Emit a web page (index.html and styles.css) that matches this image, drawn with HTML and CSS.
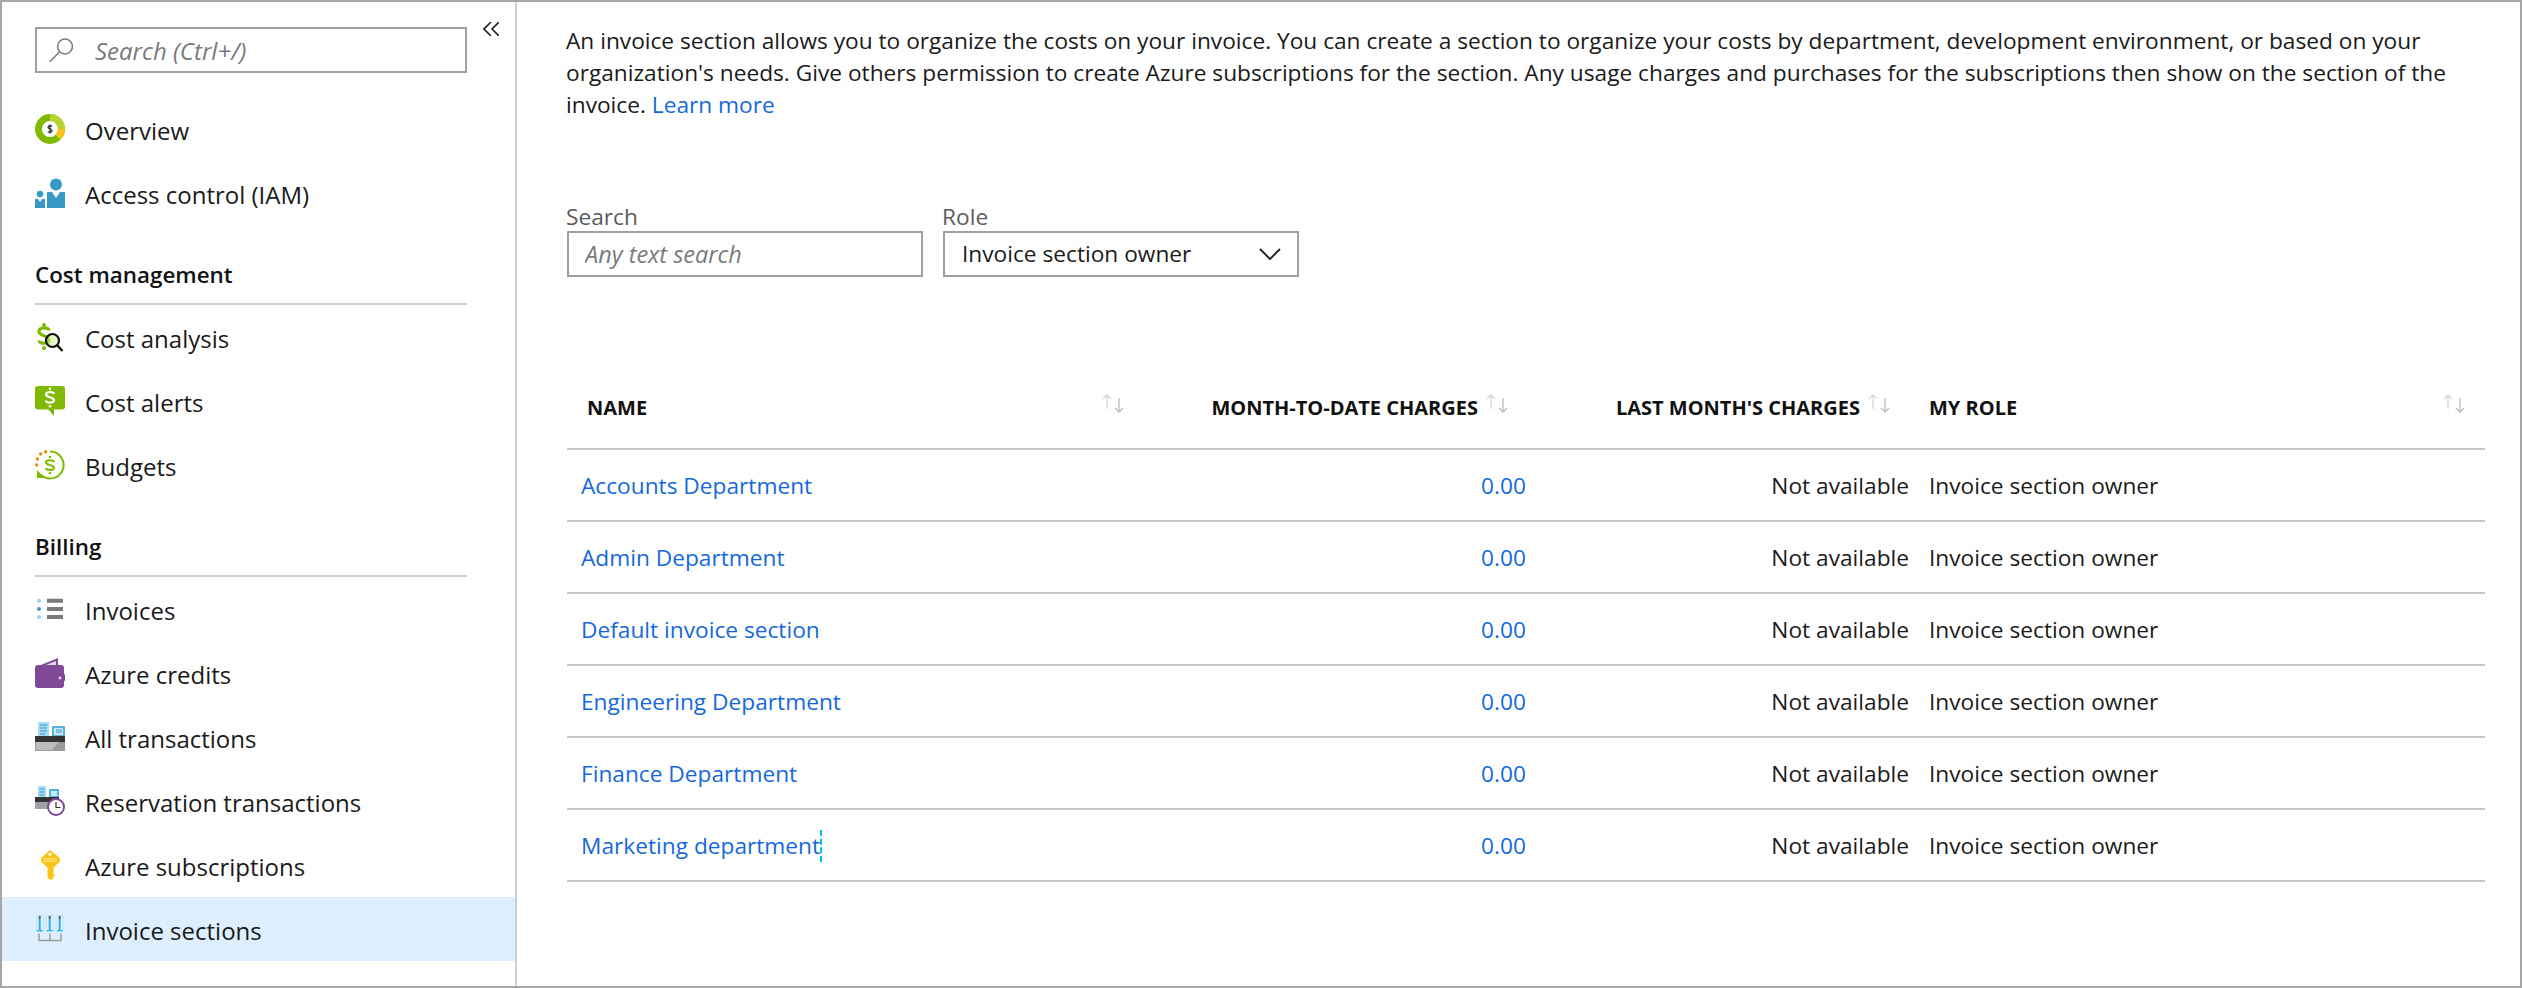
FILE: index.html
```html
<!DOCTYPE html>
<html lang="en">
<head>
    <meta charset="UTF-8">
    <meta name="viewport" content="width=device-width, initial-scale=1.0">
    <title>Invoice sections</title>
    <link rel="stylesheet" href="styles.css">
</head>
<body>
<div class="frame">
    <nav class="sidebar">
        <div class="side-top">
            <div class="side-search">
                <svg class="search-icon" viewBox="0 0 24 24" fill="none" stroke="#7a7a7a" stroke-width="1.5"><circle cx="16" cy="8.5" r="7.4"/><path d="M10.6 13.8 0.6 24"/></svg>
                <input class="side-input" type="text" placeholder="Search (Ctrl+/)">
            </div>
            <svg class="collapse" viewBox="0 0 16 14" fill="none" stroke="#222" stroke-width="1.6"><path d="M8 0 1 7l7 7M16 0 9 7l7 7"/></svg>
        </div>

        <a class="nav-item">
            <svg class="nav-icon" viewBox="0 0 30 30">
                <circle cx="15" cy="15" r="11.5" fill="none" stroke="#7fba00" stroke-width="7"/>
                <path d="M15 0A15 15 0 0 1 30 15H22.500A7.500 7.500 0 0 0 15 7.500Z" fill="#b8d432"/>
                <path d="M30 15A15 15 0 0 1 25.500 25.700L20.300 20.400A7.500 7.500 0 0 0 22.500 15Z" fill="#fcc419"/>
                <circle cx="15" cy="15" r="7.700" fill="#fff"/>
                <path d="M17 12.600C17 11.300 13 11 13 13.300 13 15.400 17 14.700 17 16.800 17 18.900 13 18.600 13 17.300M15 10.500V19.500" fill="none" stroke="#222" stroke-width="1.200"/>
            </svg>
            <span>Overview</span>
        </a>
        <a class="nav-item">
            <svg class="nav-icon" viewBox="0 0 30 30" fill="#3999c6">
                <circle cx="21" cy="6.500" r="6"/>
                <path d="M12 14H17L21 20 25 14H30V30H12Z"/>
                <circle cx="5" cy="16" r="3.300"/>
                <path d="M0 21H3L5 24 7 21H10V30H0Z"/>
            </svg>
            <span>Access control (IAM)</span>
        </a>

        <div class="side-heading">Cost management</div>
        <a class="nav-item">
            <svg class="nav-icon" viewBox="0 0 30 30">
                <circle cx="9" cy="3" r="2" fill="#7fba00"/>
                <circle cx="9" cy="26" r="2" fill="#7fba00"/>
                <path d="M14 8.500C14 5 4 4.500 4 9.500 4 14.500 14 13 14 18 14 22.500 4 22 4 18.500" fill="none" stroke="#7fba00" stroke-width="3.200"/>
                <circle cx="17.500" cy="18.500" r="6.500" fill="#d6eb9f" fill-opacity=".55" stroke="#111" stroke-width="2.200"/>
                <path d="M22 23 27.500 29" stroke="#111" stroke-width="2.400"/>
            </svg>
            <span>Cost analysis</span>
        </a>
        <a class="nav-item">
            <svg class="nav-icon" viewBox="0 0 30 30">
                <rect width="30" height="23.500" rx="3" fill="#7fba00"/>
                <path d="M13 23H19V30Z" fill="#7fba00"/>
                <circle cx="15" cy="2.800" r="1.300" fill="#fff"/>
                <circle cx="15" cy="20.200" r="1.300" fill="#fff"/>
                <path d="M19 8C19 5.600 11 5.200 11 8.500 11 11.800 19 10.700 19 14.300 19 17.600 11 17.200 11 14.500" fill="none" stroke="#fff" stroke-width="2.200"/>
            </svg>
            <span>Cost alerts</span>
        </a>
        <a class="nav-item">
            <svg class="nav-icon" viewBox="0 0 30 30">
                <path d="M15 1.500A13.500 13.500 0 1 1 6 25" fill="none" stroke="#7fba00" stroke-width="2"/>
                <path d="M2 20V28H10Z" fill="#7fba00"/>
                <circle cx="1.800" cy="15" r="1.700" fill="#e8890c"/>
                <circle cx="2.400" cy="9" r="1.700" fill="#e8890c"/>
                <circle cx="5.700" cy="4" r="1.700" fill="#e8890c"/>
                <circle cx="10.700" cy="1.800" r="1.700" fill="#e8890c"/>
                <circle cx="15" cy="7" r="1.300" fill="#7fba00"/>
                <circle cx="15" cy="23" r="1.300" fill="#7fba00"/>
                <path d="M19 12C19 9.800 11 9.400 11 12.500 11 15.600 19 14.400 19 17.800 19 20.800 11 20.500 11 18" fill="none" stroke="#7fba00" stroke-width="2.200"/>
            </svg>
            <span>Budgets</span>
        </a>

        <div class="side-heading">Billing</div>
        <a class="nav-item">
            <svg class="nav-icon" viewBox="0 0 30 30">
                <circle cx="4" cy="6.700" r="2" fill="#8fd3f0"/>
                <circle cx="4" cy="15" r="2" fill="#3999c6"/>
                <circle cx="4" cy="23" r="2" fill="#8fd3f0"/>
                <path d="M12 4.700H28V8.700H12ZM12 13H28V17H12ZM12 21H28V25H12Z" fill="#7a7a7a"/>
            </svg>
            <span>Invoices</span>
        </a>
        <a class="nav-item">
            <svg class="nav-icon" viewBox="0 0 30 30">
                <path d="M1 9 23 0V10H1Z" fill="#804998"/>
                <path d="M6 9 21 3V9Z" fill="#e4d6ea"/>
                <rect y="7" width="29" height="23" rx="3" fill="#804998"/>
                <rect x="26" y="16" width="4" height="7" rx="1" fill="#804998"/>
                <circle cx="25" cy="20" r="1.400" fill="#e4d6ea"/>
            </svg>
            <span>Azure credits</span>
        </a>
        <a class="nav-item">
            <svg class="nav-icon" viewBox="0 0 30 30">
                <path d="M3 0H14V15H3Z" fill="#a8dcf2"/>
                <path d="M5 3H12M5 6H12M5 9H12M5 12H10" stroke="#3999c6" stroke-width="1.200"/>
                <path d="M17 4H30V15H17Z" fill="#59b4d9"/>
                <path d="M19 6H28V13H19Z" fill="#c7eaf8"/>
                <path d="M21 8H27M21 10H27" stroke="#3999c6" stroke-width="1.200"/>
                <path d="M0 14H30V20H0Z" fill="#333333"/>
                <path d="M0 20H30V29H0Z" fill="#999a9b"/>
                <path d="M1 20H24L17 28H1Z" fill="#bcbcbc"/>
            </svg>
            <span>All transactions</span>
        </a>
        <a class="nav-item">
            <svg class="nav-icon" viewBox="0 0 30 30">
                <path d="M3 0H11V12H3Z" fill="#a8dcf2"/>
                <path d="M4.500 3H9.500M4.500 6H9.500M4.500 9H9.500" stroke="#3999c6" stroke-width="1"/>
                <path d="M14 3H24V12H14Z" fill="#59b4d9"/>
                <path d="M16 5H22V10H16Z" fill="#c7eaf8"/>
                <path d="M0 11H24V16H0Z" fill="#333333"/>
                <path d="M0 16H24V23H0Z" fill="#a0a1a2"/>
                <circle cx="21" cy="21" r="8" fill="#fff" stroke="#804998" stroke-width="2"/>
                <path d="M21 16V21.500H25.500" fill="none" stroke="#333" stroke-width="1.200"/>
            </svg>
            <span>Reservation transactions</span>
        </a>
        <a class="nav-item">
            <svg class="nav-icon" viewBox="0 0 30 30">
                <path d="M15 0 25 8V11.500L18.500 17.500V24L20 25.500 18 27 18.500 28.500 15.500 30 12.500 28V17.500L6 11.500V8Z" fill="#fcc419"/>
                <circle cx="15" cy="4.200" r="1.500" fill="#fff"/>
                <path d="M8.500 8.800H21.500M8.500 11.400H21.500" stroke="#ffe58a" stroke-width="1.200"/>
            </svg>
            <span>Azure subscriptions</span>
        </a>
        <a class="nav-item nav-active">
            <svg class="nav-icon" viewBox="0 0 30 30">
                <g fill="none" stroke="#9adcf5" stroke-width="1" stroke-dasharray="1 1">
                    <rect x="1.500" y="1.500" width="7" height="16"/>
                    <rect x="11" y="1.500" width="7" height="16"/>
                    <rect x="21" y="1.500" width="7" height="16"/>
                </g>
                <path d="M4.700 2V5M14.700 2V5M24.700 2V5" stroke="#5a5a5a" stroke-width="2"/>
                <path d="M4.700 5V16M14.700 5V16M24.700 5V16" stroke="#32aee6" stroke-width="2"/>
                <path d="M2 16.700H7.500M12 16.700H17.500M22 16.700H27.500" stroke="#32aee6" stroke-width="1.200"/>
                <path d="M4 19.500V26.500H26V19.500M15 19.500V26.500" fill="none" stroke="#9a9a9a" stroke-width="1.500"/>
            </svg>
            <span>Invoice sections</span>
        </a>
    </nav>

    <main class="content">
        <p class="intro">An invoice section allows you to organize the costs on your invoice. You can create a section to organize your costs by department, development environment, or based on your<br>organization's needs. Give others permission to create Azure subscriptions for the section. Any usage charges and purchases for the subscriptions then show on the section of the<br>invoice. <a class="link">Learn more</a></p>

        <div class="filters">
            <div class="field">
                <label class="field-label" for="sectionSearch">Search</label>
                <input class="field-box field-input" id="sectionSearch" type="text" placeholder="Any text search">
            </div>
            <div class="field">
                <span class="field-label">Role</span>
                <div class="field-box field-select">
                    <span>Invoice section owner</span>
                    <svg class="select-chevron" viewBox="0 0 22 12" fill="none" stroke="#222" stroke-width="1.900"><path d="M1 1 11 11 21 1"/></svg>
                </div>
            </div>
        </div>

        <table class="sections">
            <colgroup>
                <col class="col-name">
                <col class="col-month">
                <col class="col-last">
                <col class="col-role">
            </colgroup>
            <thead>
                <tr>
                    <th class="th-name"><div class="th-inner between">NAME <svg class="sort" viewBox="0 0 24 20"><use href="#sortArrows"/></svg></div></th>
                    <th class="th-month"><div class="th-inner end">MONTH-TO-DATE CHARGES <svg class="sort" viewBox="0 0 24 20"><use href="#sortArrows"/></svg></div></th>
                    <th class="th-last"><div class="th-inner end">LAST MONTH'S CHARGES <svg class="sort" viewBox="0 0 24 20"><use href="#sortArrows"/></svg></div></th>
                    <th class="th-role"><div class="th-inner between">MY ROLE <svg class="sort" viewBox="0 0 24 20"><use href="#sortArrows"/></svg></div></th>
                </tr>
            </thead>
            <tbody>
                <tr><td class="td-name"><a class="link">Accounts Department</a></td><td class="td-month"><a class="link">0.00</a></td><td class="td-last">Not available</td><td class="td-role">Invoice section owner</td></tr>
                <tr><td class="td-name"><a class="link">Admin Department</a></td><td class="td-month"><a class="link">0.00</a></td><td class="td-last">Not available</td><td class="td-role">Invoice section owner</td></tr>
                <tr><td class="td-name"><a class="link">Default invoice section</a></td><td class="td-month"><a class="link">0.00</a></td><td class="td-last">Not available</td><td class="td-role">Invoice section owner</td></tr>
                <tr><td class="td-name"><a class="link">Engineering Department</a></td><td class="td-month"><a class="link">0.00</a></td><td class="td-last">Not available</td><td class="td-role">Invoice section owner</td></tr>
                <tr><td class="td-name"><a class="link">Finance Department</a></td><td class="td-month"><a class="link">0.00</a></td><td class="td-last">Not available</td><td class="td-role">Invoice section owner</td></tr>
                <tr><td class="td-name"><a class="link link-focus">Marketing department</a></td><td class="td-month"><a class="link">0.00</a></td><td class="td-last">Not available</td><td class="td-role">Invoice section owner</td></tr>
            </tbody>
        </table>
    </main>
</div>

<svg class="defs" width="0" height="0">
    <symbol id="sortArrows" viewBox="0 0 24 20">
        <path d="M5 15V1M1 5 5 1 9 5" fill="none" stroke="#d8d8d8" stroke-width="1.300"/>
        <path d="M17 4V18M13 14 17 18 21 14" fill="none" stroke="#bdbdbd" stroke-width="1.300"/>
    </symbol>
</svg>
</body>
</html>
```

FILE: styles.css
```css
* {
    box-sizing: border-box;
}

body {
    margin: 0;
    font-family: "Open Sans", "Noto Sans", sans-serif;
    font-size: 22.7px;
    line-height: 32px;
    color: #1a1a1a;
    background-color: #ffffff;
}

.frame {
    display: flex;
    height: 988px;
    border: 2px solid #a6a6a6;
}

/* sidebar */
.sidebar {
    width: 515px;
    flex-shrink: 0;
    padding-top: 25px;
    border-right: 2px solid #cfcfcf;
}

.side-top {
    display: flex;
    padding-left: 33px;
    margin-bottom: 24px;
}

.side-search {
    display: flex;
    align-items: center;
    width: 432px;
    height: 46px;
    padding-left: 12px;
    border: 2px solid #a0a0a0;
}

.search-icon {
    width: 24px;
    height: 24px;
    flex-shrink: 0;
}

.side-input {
    flex: 1;
    min-width: 0;
    margin-left: 22px;
    padding: 0;
    border: none;
    outline: none;
    font-family: inherit;
    font-size: 24px;
    font-style: italic;
    color: #7a7a7a;
}

.side-input::placeholder,
.field-input::placeholder {
    color: #7a7a7a;
    opacity: 1;
}

.collapse {
    width: 16px;
    height: 14px;
    margin: -5px 0 0 16px;
}

.nav-item {
    display: flex;
    align-items: center;
    gap: 20px;
    height: 64px;
    padding-left: 33px;
    font-size: 24px;
}

.nav-item span {
    padding-top: 3px;
}

.nav-active {
    background-color: #ddeffe;
}

.nav-icon {
    width: 30px;
    height: 30px;
    flex-shrink: 0;
}

.side-heading {
    margin: 0 48px 0 33px;
    padding: 34px 0 12px;
    border-bottom: 2px solid #cfcfcf;
    font-weight: 600;
    font-size: 22.4px;
    color: #111111;
}

/* main content */
.content {
    flex: 1;
    min-width: 0;
    padding: 23px 35px 0 50px;
}

.intro {
    margin: 0 0 0 -1px;
    white-space: nowrap;
}

.link {
    color: #1568dc;
    text-decoration: none;
}

.link-focus {
    display: inline-block;
    border-right: 2px dashed #00bcf2;
}

.filters {
    display: flex;
    gap: 20px;
    margin-top: 82px;
}

.field {
    width: 356px;
}

.field-label {
    display: block;
    height: 28px;
    line-height: 28px;
    margin-left: -1px;
    color: #5a5a5a;
}

.field-box {
    width: 100%;
    height: 46px;
    border: 2px solid #a0a0a0;
}

.field-input {
    display: block;
    padding: 0 16px;
    outline: none;
    font-family: inherit;
    font-size: 23.5px;
    font-style: italic;
}

.field-select {
    display: flex;
    align-items: center;
    justify-content: space-between;
    padding: 0 16px 0 17px;
}

.select-chevron {
    width: 22px;
    height: 12px;
}

/* table */
.sections {
    width: 100%;
    margin-top: 91px;
    border-collapse: separate;
    border-spacing: 0;
    table-layout: fixed;
}

.col-name {
    width: 568px;
}

.col-month {
    width: 405px;
}

.col-last {
    width: 376px;
}

.sections th,
.sections td {
    padding-top: 0;
    padding-bottom: 0;
    border-bottom: 2px solid #c8c8c8;
}

.sections th {
    height: 82px;
    font-size: 20px;
    font-weight: 700;
    color: #111111;
    text-align: left;
}

.sections td {
    height: 72px;
    padding-top: 2px;
}

.th-inner {
    display: flex;
    align-items: center;
    gap: 8px;
}

.between {
    justify-content: space-between;
}

.end {
    justify-content: flex-end;
}

.sort {
    width: 24px;
    height: 20px;
    margin-top: -8px;
    flex-shrink: 0;
}

.defs {
    position: absolute;
}

.th-name {
    padding: 0 9px 0 20px;
}

.th-month {
    padding-right: 30px;
}

.th-last {
    padding-right: 24px;
}

.th-role {
    padding: 0 18px 0 13px;
}

.td-name {
    padding-left: 14px;
}

.td-month {
    padding-right: 14px;
    text-align: right;
}

.td-last {
    padding-right: 7px;
    text-align: right;
}

.td-role {
    padding-left: 13px;
}
```
